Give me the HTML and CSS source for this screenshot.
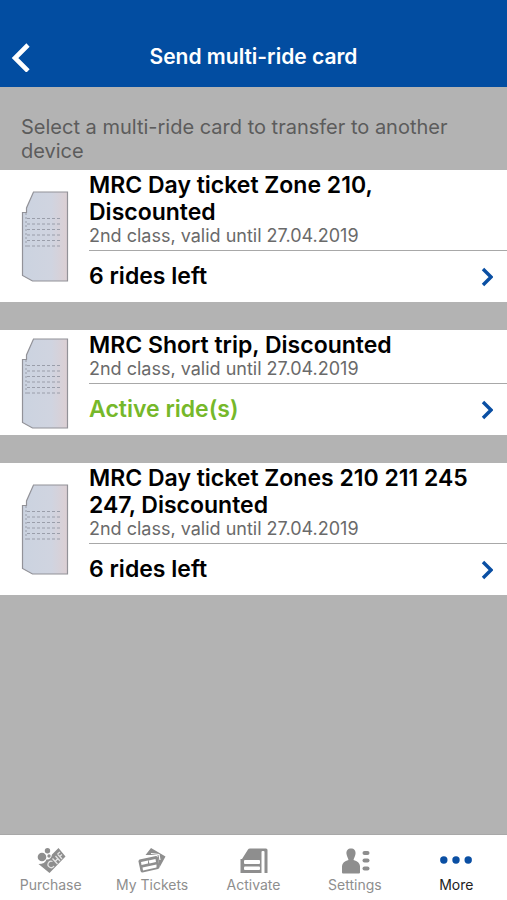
FILE: index.html
```html
<!DOCTYPE html>
<html lang="en">
<head>
    <meta charset="UTF-8">
    <meta name="viewport" content="width=device-width, initial-scale=1.0">
    <title>Send multi-ride card</title>
    <link rel="stylesheet" href="styles.css">
</head>
<body>

<!-- Shared drawings -->
<svg class="defs" width="0" height="0" aria-hidden="true">
    <defs>
        <linearGradient id="ticket-fill" x1="0" x2="1" y1="0" y2="0">
            <stop offset="0" stop-color="#cbd3e0"/>
            <stop offset="0.65" stop-color="#d0d4e0"/>
            <stop offset="1" stop-color="#dccfd3"/>
        </linearGradient>
    </defs>
    <symbol id="ticket" viewBox="0 0 48 92">
        <path d="M12.5 1H46.5V90H11.5L1.5 84.500V21.500H5.500V17Z" fill="url(#ticket-fill)" stroke="#929298" stroke-width="1.200"/>
        <path d="M6 27.500H41M6 33H41M6 38.500H41M6 44H41M6 49.500H41M6 55H41" stroke="#9a9eaa" stroke-width="1" stroke-dasharray="3 2"/>
        <path d="M5 22V56" stroke="#9a9eaa" stroke-width="1" stroke-dasharray="2 2"/>
    </symbol>
    <symbol id="chevron" viewBox="0 0 12 20">
        <path d="M2 2L10 10L2 18" fill="none" stroke="#0a4fa3" stroke-width="3.400"/>
    </symbol>
</svg>

<header>
    <button class="back" aria-label="Back">
        <svg width="20" height="30" viewBox="0 0 20 30"><path d="M17 3L4 16L17 29" fill="none" stroke="#fff" stroke-width="4.600"/></svg>
    </button>
    <h1>Send multi-ride card</h1>
</header>

<main>
    <p class="intro">Select a multi-ride card to transfer to another device</p>

    <a class="card" href="#">
        <svg class="ticket"><use href="#ticket"/></svg>
        <div class="card-body">
            <h2>MRC Day ticket Zone 210, Discounted</h2>
            <p class="validity">2nd class, valid until 27.04.2019</p>
            <div class="status">
                <span>6 rides left</span>
                <svg class="chevron"><use href="#chevron"/></svg>
            </div>
        </div>
    </a>

    <a class="card" href="#">
        <svg class="ticket"><use href="#ticket"/></svg>
        <div class="card-body">
            <h2>MRC Short trip, Discounted</h2>
            <p class="validity">2nd class, valid until 27.04.2019</p>
            <div class="status active">
                <span>Active ride(s)</span>
                <svg class="chevron"><use href="#chevron"/></svg>
            </div>
        </div>
    </a>

    <a class="card" href="#">
        <svg class="ticket"><use href="#ticket"/></svg>
        <div class="card-body">
            <h2>MRC Day ticket Zones 210 211 245 247, Discounted</h2>
            <p class="validity">2nd class, valid until 27.04.2019</p>
            <div class="status">
                <span>6 rides left</span>
                <svg class="chevron"><use href="#chevron"/></svg>
            </div>
        </div>
    </a>
</main>

<nav>
    <a href="#">
        <svg width="30" height="28" viewBox="0 0 30 28" fill="#8e8e8e">
            <circle cx="6" cy="10" r="4.300"/>
            <circle cx="11.500" cy="3.700" r="2.700"/>
            <circle cx="13" cy="9" r="1.700"/>
            <path d="M22.500 1L29.500 9.500L13.500 26L2.500 17Q9 17 10.500 12.500Q15 13 16 7.500Z"/>
            <g fill="none" stroke="#e4e4e4" stroke-width="1.300">
                <path d="M16.500 14.500A3.200 3.200 0 1 0 18 19"/>
                <path d="M16.500 11.500L21.500 17M19.500 9L24 14M19 14.500L22 11.500M21.500 7L26 12M21.500 7L24 5M23.500 9.500L26 7.500"/>
            </g>
        </svg>
        <span>Purchase</span>
    </a>
    <a href="#">
        <svg width="30" height="28" viewBox="0 0 30 28">
            <path d="M8.500 8L14 1L28.500 9.500L22.500 20.500L20.500 8Z" fill="#8e8e8e"/>
            <path d="M14 6.500L22 7.500L23 13" fill="none" stroke="#fff" stroke-width="1.200"/>
            <path d="M2.500 12.500L19 9Q20.500 9 21 10.500L22.500 20Q22.500 21.500 21 22L5.500 25.500Q4 25.500 3.500 24L1.500 14.500Q1.500 13 2.500 12.500Z" fill="#8e8e8e"/>
            <path d="M4 15L11 13.500V16.500L4.500 18ZM11.500 13.500L18.500 12L19 15L12.500 16.500ZM5.500 20.500L19.500 17.500V20.500L6 23.500Z" fill="#fff"/>
        </svg>
        <span>My Tickets</span>
    </a>
    <a href="#">
        <svg width="30" height="28" viewBox="0 0 30 28">
            <path d="M1.500 26V12H3L9 2.500Q9.500 1.500 11 1.500H27Q28.500 1.500 28.500 3V26H25.500V5Q25.500 4 24.500 4H23.500Q22.500 4 22.500 5V26Z" fill="#8e8e8e"/>
            <rect x="5" y="13" width="16" height="4" rx="1" fill="#fff"/>
            <rect x="5" y="19.500" width="16" height="3.500" rx="1" fill="#fff"/>
        </svg>
        <span>Activate</span>
    </a>
    <a href="#">
        <svg width="30" height="28" viewBox="0 0 30 28" fill="#8e8e8e">
            <path d="M11 1.500C8 1.500 6 3.500 6.500 7C7 9.500 8 11 8.500 13Q2.500 14.500 2 19V25.500Q2 26.500 3 26.500H19Q20 26.500 20 25.500V19Q19.500 14.500 13.500 13C14 11 15 9.500 15.500 7C16 3.500 14 1.500 11 1.500Z"/>
            <rect x="22.500" y="4" width="7" height="4" rx="2"/>
            <rect x="22.500" y="11.500" width="7" height="4" rx="2"/>
            <rect x="22.500" y="19.500" width="7" height="4" rx="2"/>
        </svg>
        <span>Settings</span>
    </a>
    <a class="current" href="#" aria-current="page">
        <svg width="34" height="28" viewBox="0 0 34 28" fill="#0a4fa3">
            <circle cx="4.800" cy="13" r="3.700"/>
            <circle cx="17" cy="13" r="3.700"/>
            <circle cx="29.200" cy="13" r="3.700"/>
        </svg>
        <span>More</span>
    </a>
</nav>

</body>
</html>
```
FILE: styles.css
```css
* {
    box-sizing: border-box;
}

body {
    font-family: Inter, "Liberation Sans", sans-serif;
    background-color: #b3b3b3;
    margin: 0;
    min-height: 100vh;
    display: flex;
    flex-direction: column;
    color: #000;
}

h1, h2, p {
    margin: 0;
}

a {
    color: inherit;
    text-decoration: none;
}

.defs {
    display: block;
}

header {
    background-color: #024da1;
    color: white;
    display: grid;
    grid-template-columns: 42px 1fr 42px;
    align-items: center;
    padding: 42px 0 15px;
}

.back {
    display: flex;
    padding: 0 0 0 11px;
    border: none;
    background: none;
    cursor: pointer;
}

h1 {
    font-size: 21px;
    font-weight: 600;
    line-height: 30px;
    text-align: center;
}

main {
    flex: 1;
}

.intro {
    padding: 28px 21px 7px;
    font-size: 20px;
    line-height: 24px;
    color: #5c5c5c;
}

.card {
    display: flex;
    align-items: center;
    background-color: #fff;
    margin-bottom: 28px;
}

.ticket {
    flex: none;
    width: 48px;
    height: 92px;
    margin: 2px 20px 0 21px;
}

.card-body {
    flex: 1;
    padding-top: 2px;
}

h2 {
    font-size: 23px;
    font-weight: 600;
    line-height: 27px;
    padding-right: 21px;
}

.validity {
    font-size: 18px;
    line-height: 20px;
    padding-bottom: 4px;
    color: #6a6a6a;
}

.status {
    display: flex;
    align-items: center;
    justify-content: space-between;
    border-top: 1px solid #a8a8a8;
    padding-right: 14px;
    font-size: 23px;
    font-weight: 600;
    line-height: 51px;
}

.status.active {
    color: #76b82a;
}

.chevron {
    width: 12px;
    height: 20px;
}

nav {
    display: flex;
    background-color: #fff;
    border-top: 1px solid #a8a8a8;
}

nav a {
    flex: 1;
    display: flex;
    flex-direction: column;
    align-items: center;
    padding: 12px 0 5px;
    font-size: 14px;
    line-height: 20px;
    color: #8e8e8e;
}

nav .current {
    color: #222;
}
```
